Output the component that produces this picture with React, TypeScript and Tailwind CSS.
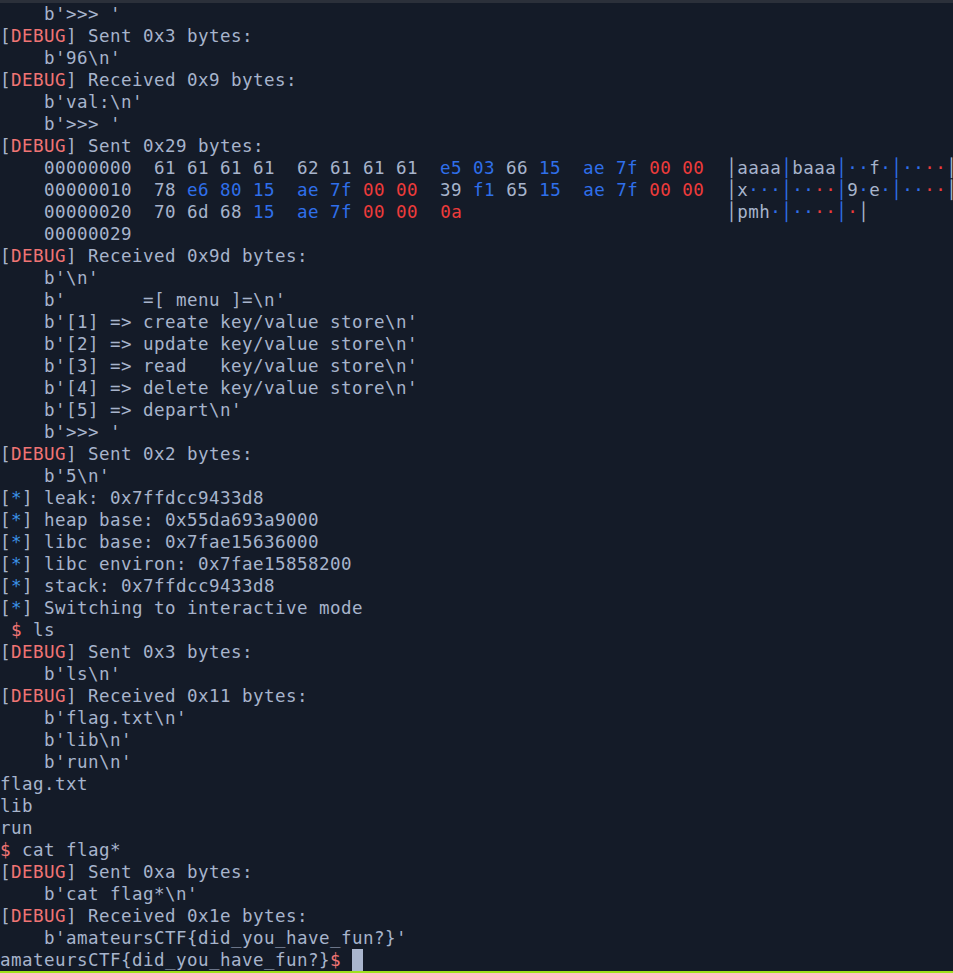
import React from "react";

type Seg = [string, string?];

const DBG = "text-[#f07474]";
const RED = "text-[#ee3b3b]";
const BLU = "text-[#2f6fea]";
const STR = "text-[#3b92e6]";
const FG = "";

const debug = (rest: string): Seg[] => [["["], ["DEBUG", DBG], ["] " + rest]];
const info = (rest: string): Seg[] => [["["], ["*", STR], ["] " + rest]];
const t = (s: string): Seg[] => [[s]];

const lines: Seg[][] = [
  t("    b'>>> '"),
  debug("Sent 0x3 bytes:"),
  t("    b'96\\n'"),
  debug("Received 0x9 bytes:"),
  t("    b'val:\\n'"),
  t("    b'>>> '"),
  debug("Sent 0x29 bytes:"),
  [
    ["    00000000  61 61 61 61  62 61 61 61  "],
    ["e5 03", BLU],
    [" 66 "],
    ["15", BLU],
    ["  "],
    ["ae 7f", BLU],
    [" "],
    ["00 00", RED],
    ["  │aaaa"],
    ["│", BLU],
    ["baaa"],
    ["│··", BLU],
    ["f"],
    ["·│··", BLU],
    ["··", RED],
    ["│"],
  ],
  [
    ["    00000010  78 "],
    ["e6 80 15", BLU],
    ["  "],
    ["ae 7f", BLU],
    [" "],
    ["00 00", RED],
    ["  39 "],
    ["f1", BLU],
    [" 65 "],
    ["15", BLU],
    ["  "],
    ["ae 7f", BLU],
    [" "],
    ["00 00", RED],
    ["  │x"],
    ["···│··", BLU],
    ["··", RED],
    ["│", BLU],
    ["9"],
    ["·", BLU],
    ["e"],
    ["·│··", BLU],
    ["··", RED],
    ["│"],
  ],
  [
    ["    00000020  70 6d 68 "],
    ["15", BLU],
    ["  "],
    ["ae 7f", BLU],
    [" "],
    ["00 00", RED],
    ["  "],
    ["0a", RED],
    ["                        │pmh"],
    ["·│··", BLU],
    ["··", RED],
    ["│", BLU],
    ["·", RED],
    ["│"],
  ],
  t("    00000029"),
  debug("Received 0x9d bytes:"),
  t("    b'\\n'"),
  t("    b'       =[ menu ]=\\n'"),
  t("    b'[1] => create key/value store\\n'"),
  t("    b'[2] => update key/value store\\n'"),
  t("    b'[3] => read   key/value store\\n'"),
  t("    b'[4] => delete key/value store\\n'"),
  t("    b'[5] => depart\\n'"),
  t("    b'>>> '"),
  debug("Sent 0x2 bytes:"),
  t("    b'5\\n'"),
  info("leak: 0x7ffdcc9433d8"),
  info("heap base: 0x55da693a9000"),
  info("libc base: 0x7fae15636000"),
  info("libc environ: 0x7fae15858200"),
  info("stack: 0x7ffdcc9433d8"),
  info("Switching to interactive mode"),
  [[" "], ["$", DBG], [" ls"]],
  debug("Sent 0x3 bytes:"),
  t("    b'ls\\n'"),
  debug("Received 0x11 bytes:"),
  t("    b'flag.txt\\n'"),
  t("    b'lib\\n'"),
  t("    b'run\\n'"),
  t("flag.txt"),
  t("lib"),
  t("run"),
  [["$", DBG], [" cat flag*"]],
  debug("Sent 0xa bytes:"),
  t("    b'cat flag*\\n'"),
  debug("Received 0x1e bytes:"),
  t("    b'amateursCTF{did_you_have_fun?}'"),
];

export default function App() {
  return (
    <div className="w-[953px] h-[973px] bg-[#141b28] flex flex-col overflow-hidden">
      <div className="h-[3px] bg-[#2b303a] shrink-0" />
      <div
        className="flex-1 text-[#a7b4cc] text-[17.5px] tracking-[0.465px] leading-[22px]"
        style={{ fontFamily: '"DejaVu Sans Mono", "Liberation Mono", monospace' }}
      >
        {lines.map((segs, i) => (
          <div key={i} className="h-[22px] whitespace-pre">
            {segs.map(([s, c], j) => (
              <span key={j} className={c ?? FG}>
                {s}
              </span>
            ))}
          </div>
        ))}
        <div className="h-[22px] whitespace-pre flex items-start">
          <span>amateursCTF{"{"}did_you_have_fun?{"}"}</span>
          <span className={DBG}>$</span>
          <span> </span>
          <span className="inline-block w-[11px] h-[22px] bg-[#aab6ce]" />
        </div>
      </div>
      <div className="h-[2px] bg-[#9fe11e] shrink-0" />
    </div>
  );
}
